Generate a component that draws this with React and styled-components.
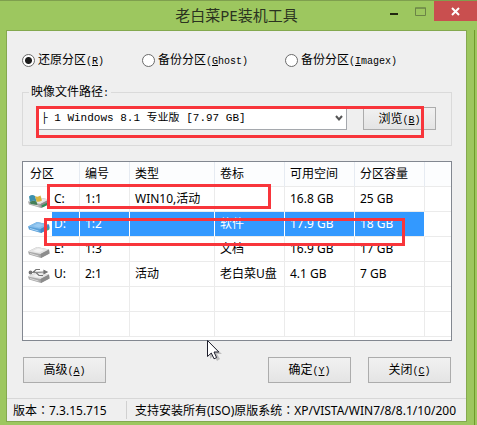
import React, { Fragment, useState } from 'react';
import styled, { createGlobalStyle, css } from 'styled-components';

const GlobalStyle = createGlobalStyle`
	* {
		box-sizing: border-box;
	}
	body {
		margin: 0;
		background: #9dc75f;
		color: #000;
		font-family: "Noto Sans", "Noto Sans CJK SC", sans-serif;
		font-size: 12px;
		line-height: 16px;
	}
`;

const Window = styled.div`
	min-height: 100vh;
	display: flex;
	flex-direction: column;
	border-top: 1px solid #7f9f4e;
	overflow: hidden;
`;

const TitleBar = styled.header`
	position: relative;
	height: 29px;
	display: flex;
	align-items: center;
	justify-content: center;
`;

const Title = styled.h1`
	margin: 0;
	padding: 0 4px 2px 0;
	font-size: 15px;
	font-weight: 400;
	line-height: 20px;
	color: #2b331f;
`;

const WindowButtons = styled.div`
	position: absolute;
	top: 0;
	right: 0;
	display: flex;
`;

const WindowButton = styled.button`
	width: ${(props) => (props.$close ? 43 : 27)}px;
	height: 20px;
	padding: 0;
	border: 0;
	display: flex;
	align-items: center;
	justify-content: center;
	background: ${(props) => (props.$close ? '#c94f4f' : 'transparent')};
`;

const Frame = styled.div`
	flex: 1;
	display: flex;
	margin-right: 2px;
	padding: 0 7px 3px 6px;
	border-right: 1px solid #6f9a2c;
`;

const Client = styled.main`
	position: relative;
	flex: 1;
	min-width: 0;
	display: flex;
	flex-direction: column;
	border: 1px solid #84a94f;
	background: #efefef;
`;

const Content = styled.form`
	flex: 1;
	padding: 21px 14px 15px 15px;
`;

const song = css`
	font-family: "Liberation Mono", "Noto Sans CJK SC", monospace;
`;

// half-width letters are 6px wide, next to 12px Chinese characters
const Latin = styled.span`
	${song}
	font-size: 10px;
	line-height: 0;
`;

const RadioRow = styled.div`
	display: grid;
	grid-template-columns: 120px 143px 1fr;
	margin-bottom: 16px;
`;

const RadioLabel = styled.label`
	display: flex;
	align-items: center;
	gap: 3px;
	height: 16px;
	white-space: nowrap;
`;

const Radio = styled.input`
	appearance: none;
	width: 13px;
	height: 13px;
	margin: 0;
	border: 1px solid #6a6a6a;
	border-radius: 50%;
	background: #fff;
	&:checked {
		background: radial-gradient(circle, #1c1c1c 3px, #fff 4px);
	}
`;

const Group = styled.fieldset`
	min-width: 0;
	margin: 0 0 15px;
	padding: 7px 15px 15px 14px;
	border: 1px solid #dadada;
	& > legend {
		height: 16px;
		margin-left: -8px;
		padding: 0 2px;
	}
`;

const PathRow = styled.div`
	position: relative;
	display: flex;
	align-items: center;
	gap: 16px;
`;

const SelectBox = styled.div`
	flex: 1;
	min-width: 0;
	height: 22px;
	display: grid;
	align-items: center;
	& > * {
		grid-area: 1 / 1;
	}
	& > svg {
		justify-self: end;
		margin-right: 4px;
		pointer-events: none;
	}
`;

const Select = styled.select`
	${song}
	appearance: none;
	width: 100%;
	height: 22px;
	padding: 0 20px 2px 3px;
	border: 1px solid #a5a8ad;
	border-radius: 0;
	background: #fff;
	color: #000;
	font-size: 11px;
`;

const Button = styled.button`
	width: ${(props) => (props.$small ? 73 : 83)}px;
	height: ${(props) => (props.$small ? 23 : 26)}px;
	padding: 0;
	border: 1px solid #acacac;
	background: linear-gradient(#f1f1f1, #e4e4e4);
	color: #000;
	font-family: inherit;
	font-size: 12px;
	line-height: 16px;
	white-space: nowrap;
`;

const ListView = styled.div`
	position: relative;
	padding-bottom: 3px;
	border: 1px solid #828790;
	background: #fff;
`;

const Table = styled.table`
	width: 100%;
	table-layout: fixed;
	border-collapse: separate;
	border-spacing: 0;
`;

const HeadCell = styled.th`
	height: 25px;
	padding: 0 0 0 ${(props) => (props.$first ? 7 : 5)}px;
	border-right: 1px solid #e6ebf2;
	border-bottom: 1px solid #ebebeb;
	background: #fcfdfe;
	font-weight: 400;
	text-align: left;
	&:last-child {
		border-right: 0;
	}
`;

const Cell = styled.td`
	height: 25px;
	padding: 0 0 0 5px;
	border-right: 1px solid #ebebeb;
	border-bottom: 1px solid #ebebeb;
	white-space: nowrap;
	&:last-child {
		border-right: 0;
	}
`;

const Row = styled.tr`
	${(props) =>
		props.$selected &&
		css`
			& > td:not(:first-child):not(:last-child) {
				background: #3399ff;
				background-clip: padding-box;
				color: #fff;
			}
			& > td:not(:last-child) {
				border-right-color: #fff;
			}
		`}
`;

const Drive = styled.div`
	height: 24px;
	display: flex;
	align-items: center;
	gap: 2px;
	& > svg {
		flex: none;
		margin-top: 4px;
	}
`;

const DriveName = styled.span`
	flex: 1;
	padding-left: 2px;
	line-height: 24px;
	background: ${(props) => (props.$selected ? '#3399ff' : 'transparent')};
	color: ${(props) => (props.$selected ? '#fff' : 'inherit')};
`;

const Mark = styled.div`
	position: absolute;
	top: ${(props) => props.$top}px;
	left: ${(props) => props.$left}px;
	${(props) => (props.$right ? `right: ${props.$right}px;` : `width: ${props.$width}px;`)}
	height: ${(props) => props.$height}px;
	border: 3px solid #f8353b;
	pointer-events: none;
`;

const Actions = styled.div`
	display: flex;
	gap: 17px;
	margin-top: 16px;
	padding: 0 1px;
	& > :first-child {
		margin-right: auto;
	}
`;

// the TC face centres the full-width colon
const StatusBar = styled.footer`
	display: flex;
	height: 23px;
	padding: 2px 0;
	border-top: 1px solid #d7d7d7;
	font-family: "Noto Sans", "Noto Sans CJK TC", sans-serif;
	line-height: 20px;
	white-space: nowrap;
	overflow: hidden;
`;

const StatusCell = styled.div`
	padding-left: ${(props) => (props.$first ? 6 : 8)}px;
	${(props) =>
		props.$first &&
		css`
			flex: none;
			width: 120px;
			border-right: 1px solid #d0d0d0;
		`}
`;

const Pointer = styled.svg`
	position: absolute;
	left: 200px;
	top: 309px;
	pointer-events: none;
`;

const modes = [
	{ id: 'restore', text: '还原分区', hotkey: 'R' },
	{ id: 'ghost', text: '备份分区', hotkey: 'G', rest: 'host' },
	{ id: 'imagex', text: '备份分区', hotkey: 'I', rest: 'magex' },
];

const columns = [
	{ title: '分区', width: 57 },
	{ title: '编号', width: 50 },
	{ title: '类型', width: 85 },
	{ title: '卷标', width: 70 },
	{ title: '可用空间', width: 70 },
	{ title: '分区容量', width: 70 },
];

const partitions = [
	{ drive: 'C:', kind: 'system', cells: ['1:1', 'WIN10,活动', '', '16.8 GB', '25 GB'] },
	{ drive: 'D:', kind: 'blue', cells: ['1:2', '', '软件', '17.9 GB', '18 GB'] },
	{ drive: 'E:', kind: 'disk', cells: ['1:3', '', '文档', '16.9 GB', '17 GB'] },
	{ drive: 'U:', kind: 'usb', cells: ['2:1', '活动', '老白菜U盘', '4.1 GB', '7 GB'] },
];

const Hotkey = ({ letter, rest }) => (
	<Latin>
		(<u>{letter}</u>
		{rest})
	</Latin>
);

const DriveIcon = ({ kind }) => {
	const blue = kind === 'blue';
	return (
		<svg width="22" height="16" viewBox="0 0 22 16" aria-hidden="true">
			<path d="M0 8.5 L9 4 L21 6.5 L21.5 10.5 L13 15 L1 11.5Z" fill={blue ? '#5a9fd8' : '#a9a9a9'} />
			<path d="M0 8.5 L9 4 L21 6.5 L12.5 11Z" fill={blue ? '#84bdea' : '#e4e4e4'} />
			<path d="M12.5 11 L21 6.5 L21.5 10.5 L13 15Z" fill={blue ? '#4289c6' : '#8c8c8c'} />
			<path d="M5 8 L10 5.5 L16 7 L11 9.5Z" fill={blue ? '#9acbf2' : '#f4f4f4'} />
			<path d="M2 10.5 L10.5 13" stroke={blue ? '#a6d3f6' : '#d8d8d8'} />
			{blue && <path d="M18 12 L21 10.5" stroke="#3fa58c" strokeWidth="2" />}
			{kind === 'system' && (
				<g>
					<path d="M1 3.5 Q4 1 7 3 L8.5 8.5 Q5 7 2 9Z" fill="#3d91ae" />
					<path d="M7 3 Q10 4.5 12.5 2.5 L14 7.5 Q11 9.5 8.5 8.5Z" fill="#d7b641" />
					<path d="M2 9 Q5 7 8.5 8.5 L9.5 12 L2.5 11Z" fill="#457f57" />
					<path d="M14 13.5 L21 10" stroke="#2f8e55" strokeWidth="2" />
				</g>
			)}
			{kind === 'usb' && (
				<g fill="none" stroke="#747474" strokeWidth="1.2">
					<path d="M1 4.5 L18 4 M5 4.5 L8 1.5 H12 M8 4.5 L11 7.5 H15" />
					<circle cx="2.5" cy="4.5" r="1.3" fill="#747474" />
					<path d="M16 2.5 L19 4 L16 5.5Z" fill="#747474" />
				</g>
			)}
		</svg>
	);
};

const App = () => {
	const [mode, setMode] = useState('restore');
	const [selected, setSelected] = useState('D:');

	return (
		<Fragment>
			<GlobalStyle />
			<Window>
				<TitleBar>
					<Title>老白菜PE装机工具</Title>
					<WindowButtons>
						<WindowButton aria-label="最小化">
							<svg width="10" height="10">
								<path d="M1 8 H9" stroke="#20260f" strokeWidth="2" />
							</svg>
						</WindowButton>
						<WindowButton aria-label="最大化" disabled>
							<svg width="11" height="9">
								<path d="M0.5 1 H10.5 V8.5 H0.5Z M0 1 H11" fill="none" stroke="#6b8446" />
							</svg>
						</WindowButton>
						<WindowButton $close aria-label="关闭窗口">
							<svg width="9" height="9">
								<path d="M1 1 L8 8 M8 1 L1 8" stroke="#fff" strokeWidth="2" />
							</svg>
						</WindowButton>
					</WindowButtons>
				</TitleBar>
				<Frame>
					<Client>
						<Content onSubmit={(e) => e.preventDefault()}>
							<RadioRow>
								{modes.map((m) => (
									<RadioLabel key={m.id}>
										<Radio
											type="radio"
											name="mode"
											checked={mode === m.id}
											onChange={() => setMode(m.id)}
										/>
										<span>
											{m.text}
											<Hotkey letter={m.hotkey} rest={m.rest} />
										</span>
									</RadioLabel>
								))}
							</RadioRow>
							<Group>
								<legend>
									映像文件路径<Latin>:</Latin>
								</legend>
								<PathRow>
									<SelectBox>
										<Select aria-label="映像文件路径">
											<option>├ 1 Windows 8.1 专业版 [7.97 GB]</option>
										</Select>
										<svg width="8" height="7">
											<path d="M1 1 L4 4.5 L7 1" fill="none" stroke="#555" strokeWidth="2" />
										</svg>
									</SelectBox>
									<Button type="button" $small>
										浏览
										<Hotkey letter="B" />
									</Button>
									<Mark $top={-1} $left={-1} $right={12} $height={32} />
								</PathRow>
							</Group>
							<ListView>
								<Table>
									<colgroup>
										{columns.map((c) => (
											<col key={c.title} width={c.width} />
										))}
										<col />
									</colgroup>
									<thead>
										<tr>
											{columns.map((c, i) => (
												<HeadCell key={c.title} $first={i === 0}>
													{c.title}
												</HeadCell>
											))}
											<HeadCell />
										</tr>
									</thead>
									<tbody>
										{partitions.map((p) => (
											<Row
												key={p.drive}
												$selected={selected === p.drive}
												onClick={() => setSelected(p.drive)}
											>
												<Cell>
													<Drive>
														<DriveIcon kind={p.kind} />
														<DriveName $selected={selected === p.drive}>{p.drive}</DriveName>
													</Drive>
												</Cell>
												{p.cells.map((text, i) => (
													<Cell key={columns[i + 1].title}>{text}</Cell>
												))}
												<Cell />
											</Row>
										))}
										{[0, 1].map((n) => (
											<Row key={n}>
												{columns.map((c) => (
													<Cell key={c.title} />
												))}
												<Cell />
											</Row>
										))}
									</tbody>
								</Table>
								<Mark $top={22} $left={24} $width={224} $height={25} />
								<Mark $top={56} $left={21} $width={361} $height={28} />
							</ListView>
							<Actions>
								<Button type="button">
									高级
									<Hotkey letter="A" />
								</Button>
								<Button type="submit">
									确定
									<Hotkey letter="Y" />
								</Button>
								<Button type="button">
									关闭
									<Hotkey letter="C" />
								</Button>
							</Actions>
						</Content>
						<StatusBar>
							<StatusCell $first>版本：7.3.15.715</StatusCell>
							<StatusCell>支持安装所有(ISO)原版系统：XP/VISTA/WIN7/8/8.1/10/200</StatusCell>
						</StatusBar>
						<Pointer width="16" height="22">
							<path d="M3 3 V19 L7 15 L10 21 L13 19 L10 14 H15Z" fill="#000" opacity="0.2" />
							<path
								d="M0.5 0.5 V16.5 L4.3 13 L7 18.8 L9.6 17.6 L7 12 H11.8Z"
								fill="#fff"
								stroke="#1d1d2b"
							/>
						</Pointer>
					</Client>
				</Frame>
			</Window>
		</Fragment>
	);
};

export default App;
